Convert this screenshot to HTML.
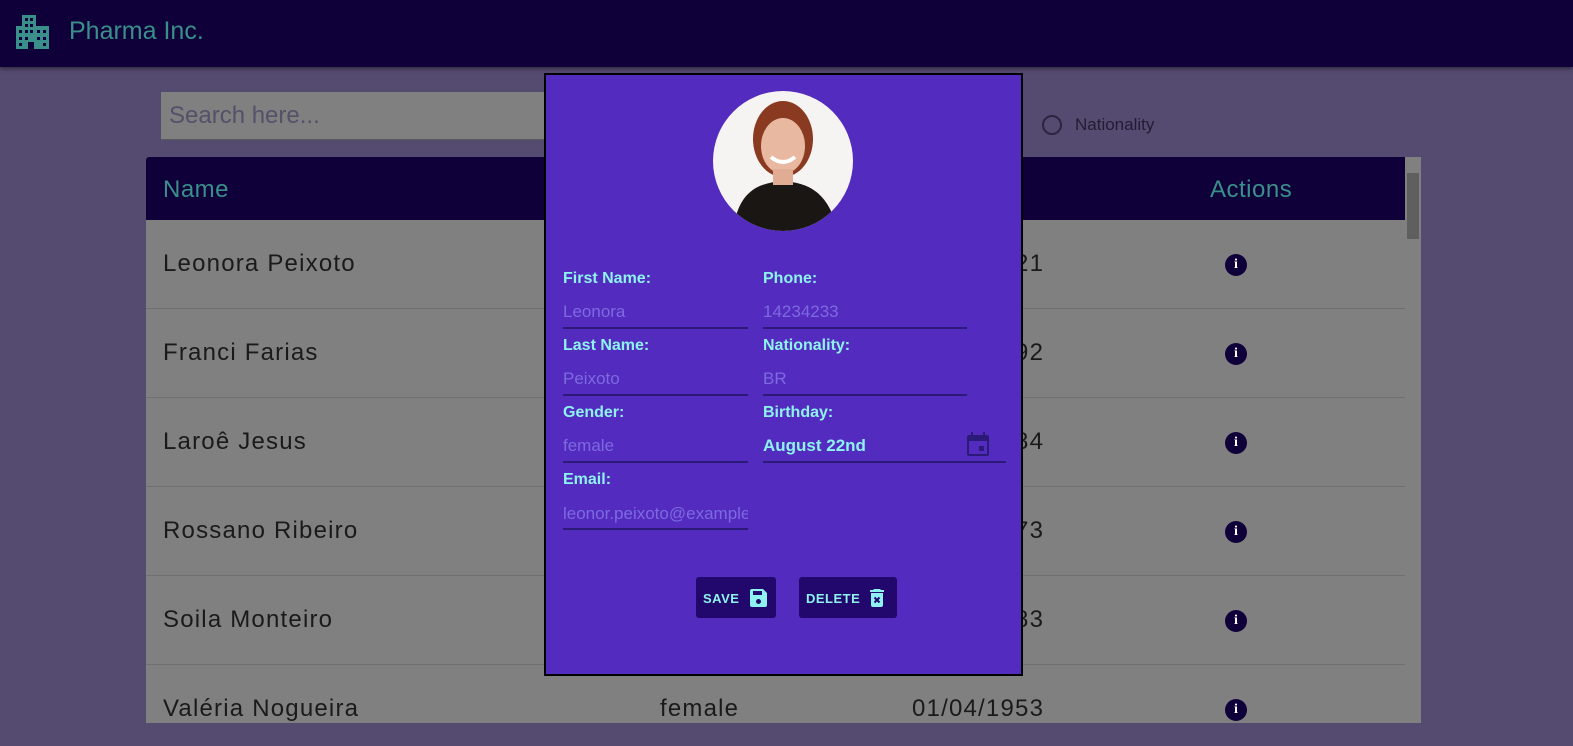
<!DOCTYPE html>
<html><head><meta charset="utf-8"><style>
*{margin:0;padding:0;box-sizing:border-box}
body{width:1573px;height:746px;overflow:hidden;background:#554a70;font-family:"Liberation Sans",Roboto,sans-serif;position:relative}
.top{position:absolute;left:0;top:0;width:1573px;height:67px;background:#10003a;box-shadow:0 2px 4px rgba(0,0,0,.4)}
.top .t{position:absolute;left:69px;top:17px;font-size:25px;color:#3a8f8a}
.search{position:absolute;left:161px;top:92px;width:400px;height:48px;background:#808080;border-bottom:1px solid #5a5a5a;font-size:24px;color:#555068;padding:10px 8px}
.radio{position:absolute;left:1042px;top:115px;width:20px;height:20px;border:2px solid #2a2540;border-radius:50%}
.rl{position:absolute;left:1075px;top:115px;font-size:17px;color:#221c33}
.tbl{position:absolute;left:146px;top:157px;width:1260px;height:566px;background:#808080;overflow:hidden;border-radius:3px 0 0 0}
.th{height:63px;background:#10003a;color:#3a8f8a;font-size:24px;position:relative;letter-spacing:.5px}
.row{height:89px;border-bottom:1px solid #707070;position:relative;font-size:24px;color:#1a1a1a;letter-spacing:1.2px}
.row span{position:absolute;top:30px}
.info{position:absolute;left:1079px;top:34px;width:22px;height:22px;border-radius:50%;background:#10003a;color:#fff;font:bold 14px "Liberation Serif",serif;text-align:center;line-height:22px;letter-spacing:0}
.sb{position:absolute;left:1405px;top:157px;width:16px;height:566px;background:#808080}
.sb i{position:absolute;left:2px;top:16px;width:12px;height:66px;background:#5f5f5f}
.modal{position:absolute;left:544px;top:73px;width:479px;height:603px;background:#532bbf;border:2px solid #000}
.lbl{position:absolute;font-size:16px;color:#8ef2f0;font-weight:bold}
.val{position:absolute;font-size:17px;color:#7d6ae0}
.ln{position:absolute;height:2px;background:#2c1a78}
.btn{position:absolute;top:502px;height:41px;background:#22086c;border-radius:3px;color:#8ef2f0;font-size:13px;font-weight:bold;padding:12px 7px;letter-spacing:.5px;white-space:nowrap}
</style></head><body>
<div class="top">
<svg style="position:absolute;left:16px;top:15px" width="33" height="34" viewBox="0 0 33 34"><path fill="#3a8f8a" d="M6 0h14v11h13v23H0V11h6z"/><g fill="#10003a"><rect x="9" y="3" width="3" height="3"/><rect x="14" y="3" width="3" height="3"/><rect x="9" y="9" width="3" height="3"/><rect x="14" y="9" width="3" height="3"/><rect x="3" y="15" width="3" height="3"/><rect x="9" y="15" width="3" height="3"/><rect x="14" y="15" width="3" height="3"/><rect x="21" y="15" width="3" height="3"/><rect x="27" y="15" width="3" height="3"/><rect x="3" y="22" width="3" height="3"/><rect x="9" y="22" width="3" height="3"/><rect x="21" y="22" width="3" height="3"/><rect x="27" y="22" width="3" height="3"/><rect x="3" y="28" width="3" height="3"/><rect x="27" y="28" width="3" height="3"/><rect x="12" y="27" width="6" height="7"/></g></svg>
<div class="t">Pharma Inc.</div></div>
<div class="search">Search here...</div>
<div class="radio"></div><div class="rl">Nationality</div>
<div class="tbl">
<div class="th"><span style="position:absolute;left:17px;top:19px">Name</span><span style="position:absolute;left:1064px;top:19px">Actions</span></div>
<div class="row"><span style="left:17px">Leonora Peixoto</span><span style="left:766px">01/01/1921</span><div class="info">i</div></div>
<div class="row"><span style="left:17px">Franci Farias</span><span style="left:766px">01/01/1992</span><div class="info">i</div></div>
<div class="row"><span style="left:17px">Laroê Jesus</span><span style="left:766px">01/01/1984</span><div class="info">i</div></div>
<div class="row"><span style="left:17px">Rossano Ribeiro</span><span style="left:766px">01/01/1973</span><div class="info">i</div></div>
<div class="row"><span style="left:17px">Soila Monteiro</span><span style="left:766px">01/01/1983</span><div class="info">i</div></div>
<div class="row"><span style="left:17px">Valéria Nogueira</span><span style="left:514px">female</span><span style="left:766px">01/04/1953</span><div class="info">i</div></div>
</div>
<div class="sb"><i></i></div>
<div class="modal">
<svg style="position:absolute;left:167px;top:16px" width="140" height="140" viewBox="0 0 140 140"><defs><clipPath id="c"><circle cx="70" cy="70" r="70"/></clipPath></defs><g clip-path="url(#c)"><rect width="140" height="140" fill="#f6f4f2"/><path d="M20 140 C25 100 45 92 70 90 C95 92 115 100 125 140Z" fill="#1a1614"/><ellipse cx="70" cy="48" rx="30" ry="38" fill="#8a3a20"/><ellipse cx="70" cy="55" rx="22" ry="28" fill="#e8b8a0"/><rect x="60" y="78" width="20" height="16" fill="#e0ac94"/><path d="M58 66 Q70 76 82 66" stroke="#fff" stroke-width="4" fill="none"/></g></svg>
<div class="lbl" style="left:17px;top:195px">First Name:</div><div class="val" style="left:17px;top:227px">Leonora</div><div class="ln" style="left:17px;top:252px;width:185px"></div>
<div class="lbl" style="left:217px;top:195px">Phone:</div><div class="val" style="left:217px;top:227px">14234233</div><div class="ln" style="left:217px;top:252px;width:204px"></div>
<div class="lbl" style="left:17px;top:262px">Last Name:</div><div class="val" style="left:17px;top:294px">Peixoto</div><div class="ln" style="left:17px;top:319px;width:185px"></div>
<div class="lbl" style="left:217px;top:262px">Nationality:</div><div class="val" style="left:217px;top:294px">BR</div><div class="ln" style="left:217px;top:319px;width:204px"></div>
<div class="lbl" style="left:17px;top:329px">Gender:</div><div class="val" style="left:17px;top:361px">female</div><div class="ln" style="left:17px;top:386px;width:185px"></div>
<div class="lbl" style="left:217px;top:329px">Birthday:</div><div class="val" style="left:217px;top:361px;color:#8ef2f0;font-weight:bold">August 22nd</div><div class="ln" style="left:217px;top:386px;width:243px"></div>
<svg style="position:absolute;left:421px;top:357px" width="22" height="24" viewBox="0 0 22 24"><path fill="#2c1a78" d="M4 0h2v3h10V0h2v3h2a2 2 0 0 1 2 2v17a2 2 0 0 1-2 2H2a2 2 0 0 1-2-2V5a2 2 0 0 1 2-2h2zM2 9v13h18V9zm10 5h5v5h-5z"/></svg>
<div class="lbl" style="left:17px;top:396px">Email:</div><div class="val" style="left:17px;top:429px;width:185px;overflow:hidden;white-space:nowrap">leonor.peixoto@example.com</div><div class="ln" style="left:17px;top:453px;width:185px"></div>
<div class="btn" style="left:150px;width:80px">SAVE <svg style="vertical-align:-4px;margin-left:6px" width="17" height="18" viewBox="0 0 17 18"><path fill="#8ef2f0" d="M0 2a2 2 0 0 1 2-2h11l4 4v12a2 2 0 0 1-2 2H2a2 2 0 0 1-2-2zM3 2v4h9V2zm5.5 8a2.5 2.5 0 1 0 0 5 2.5 2.5 0 0 0 0-5z"/></svg></div>
<div class="btn" style="left:253px;width:98px">DELETE <svg style="vertical-align:-4px;margin-left:6px" width="14" height="18" viewBox="0 0 14 18"><path fill="#8ef2f0" d="M4 0h6l1 1h3v2H0V1h3zM1 4h12v12a2 2 0 0 1-2 2H3a2 2 0 0 1-2-2z"/><path stroke="#22086c" stroke-width="2" d="M4.5 8.5l5 5m0-5l-5 5"/></svg></div>
</div>
</body></html>
